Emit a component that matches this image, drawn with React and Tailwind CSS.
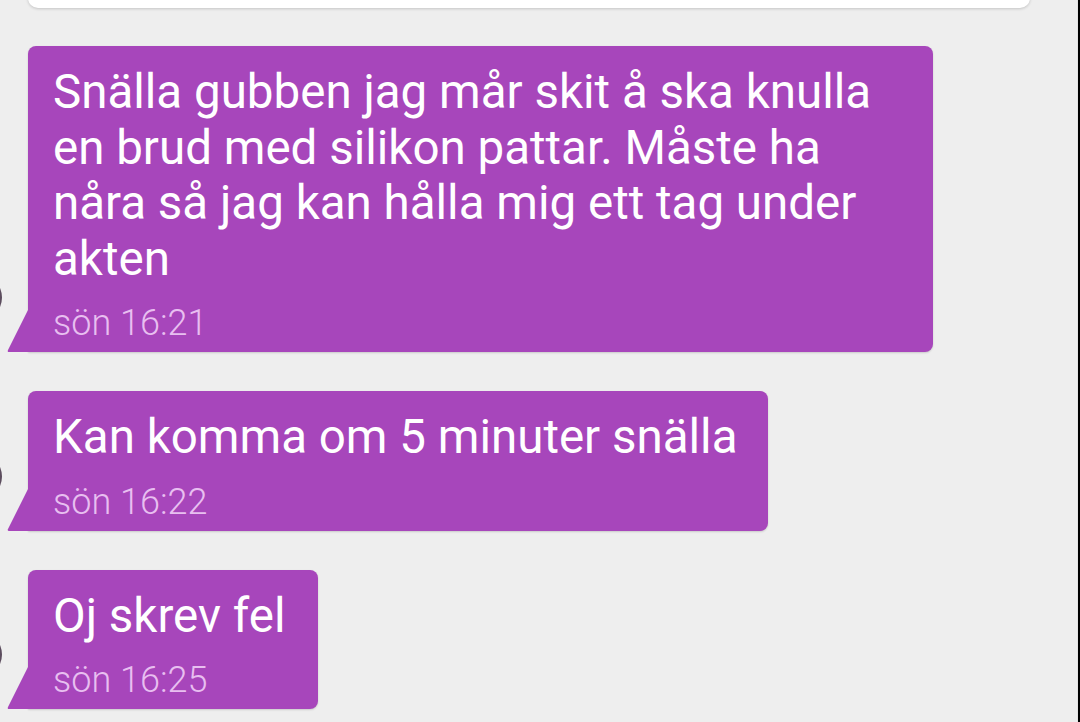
import React from "react";

const messages = [
  {
    lines: [
      "Snälla gubben jag mår skit å ska knulla",
      "en brud med silikon pattar. Måste ha",
      "nåra så jag kan hålla mig ett tag under",
      "akten",
    ],
    time: "sön 16:21",
    width: "w-[905px]",
  },
  {
    lines: ["Kan komma om 5 minuter snälla"],
    time: "sön 16:22",
    width: "w-[740px]",
  },
  {
    lines: ["Oj skrev fel"],
    time: "sön 16:25",
    width: "w-[290px]",
  },
];

function Bubble({ msg }) {
  return (
    <div className="relative ml-[28px]">
      {/* avatar peeking in from the left edge */}
      <div className="absolute left-[-73px] bottom-[31px] h-[47px] w-[47px] rounded-full bg-[#5c4d5e]" />
      <div
        className={`relative ${msg.width} rounded-[8px] rounded-bl-none bg-[#a746bb] pl-[25px] pr-[20px] pt-[19px] pb-[9px] shadow-[0_1px_2px_rgba(0,0,0,0.15)]`}
      >
        <svg
          className="absolute left-[-21px] bottom-0"
          width="21"
          height="42"
          viewBox="0 0 21 42"
        >
          <path d="M21 0 L21 42 L2 42 Q0 42 1 40 Z" fill="#a746bb" />
        </svg>
        <div className="text-[47.5px] leading-[55.5px] text-white">
          {msg.lines.map((l, i) => (
            <div key={i} className="whitespace-nowrap">
              {l}
            </div>
          ))}
        </div>
        <div className="mt-[16px] text-[36px] font-light leading-[40px] text-[#e8bff0]">
          {msg.time}
        </div>
      </div>
    </div>
  );
}

export default function App() {
  return (
    <div
      className="relative h-[722px] w-full overflow-hidden border-r-2 border-black bg-[#eeeeee]"
      style={{ fontFamily: "Roboto, 'Noto Sans', sans-serif" }}
    >
      <div className="flex h-full flex-col border-r border-[#e4e4e4]">
        {/* previous card, scrolled mostly out of view */}
        <div className="mx-[28px] mt-[-52px] h-[60px] w-[1002px] rounded-[10px] bg-white shadow-[0_1px_3px_rgba(0,0,0,0.18)]" />
        <div className="mt-[38px] flex flex-col gap-[39px]">
          {messages.map((m, i) => (
            <Bubble key={i} msg={m} />
          ))}
        </div>
      </div>
    </div>
  );
}
